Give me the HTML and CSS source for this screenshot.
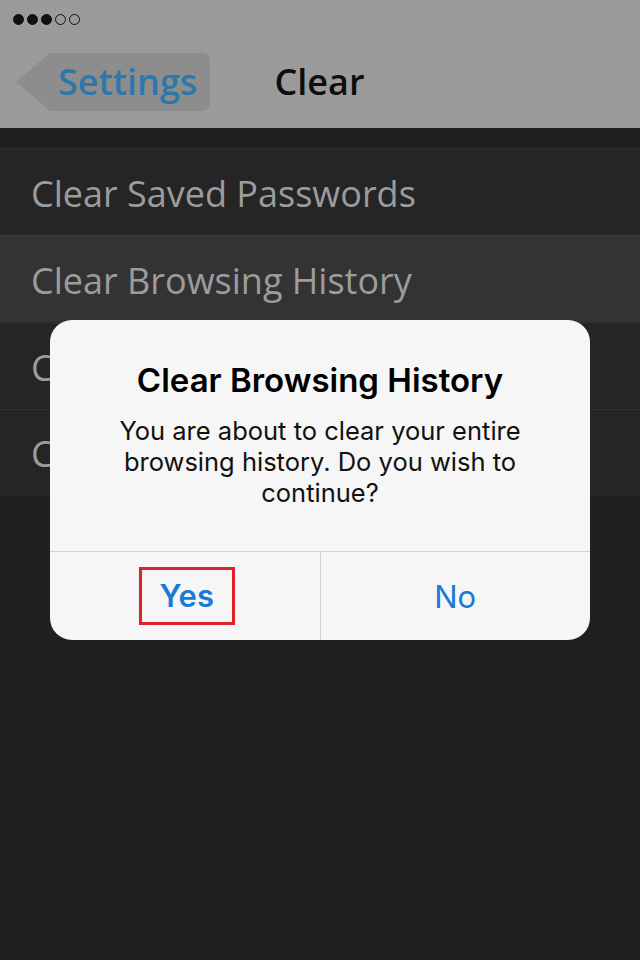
FILE: index.html
```html
<!DOCTYPE html>
<html lang="en">
<head>
<meta charset="UTF-8">
<title>Clear</title>
<link rel="stylesheet" href="styles.css">
</head>
<body>
<div class="screen">
    <div class="top">
        <div class="signal">
            <span class="dot on"></span><span class="dot on"></span><span class="dot on"></span><span class="dot"></span><span class="dot"></span>
        </div>
        <div class="nav">
            <div class="back">
                <svg class="back-tip" width="40" height="58" viewBox="0 0 40 58"><polygon points="40,0 40,58 34,58 0,29 34,0" fill="#8d8d8d"/></svg>
                <span class="back-label">Settings</span>
            </div>
            <div class="nav-title">Clear</div>
        </div>
    </div>
    <ul class="list">
        <li>Clear Saved Passwords</li>
        <li class="active">Clear Browsing History</li>
        <li>Clear Cookies</li>
        <li>Clear Cache</li>
    </ul>

    <div class="alert">
        <div class="alert-body">
            <h2>Clear Browsing History</h2>
            <p>You are about to clear your entire browsing history. Do you wish to continue?</p>
        </div>
        <div class="alert-btns">
            <div class="btn"><span class="mark">Yes</span></div>
            <div class="btn">No</div>
        </div>
    </div>
</div>
</body>
</html>
```

FILE: styles.css
```css
*{
    margin:0;
    padding:0;
    list-style: none;
    box-sizing: border-box;
}
body{
    background:#202020;
    font-family: "Open Sans", sans-serif;
}
.screen{
    width:640px;
    height:960px;
    position:relative;
    background:#202020;
    overflow:hidden;
}
.top{
    height:128px;
    background:#9b9b9b;
}
.signal{
    display:flex;
    gap:3px;
    padding:14px 0 0 13px;
    height:53px;
}
.dot{
    width:11px;
    height:11px;
    border-radius:50%;
    border:1px solid #111;
}
.dot.on{
    background:#111;
}
.nav{
    display:flex;
    align-items:flex-start;
    height:75px;
    padding-left:16px;
}
.back{
    display:flex;
    height:58px;
}
.back-label{
    background:#8d8d8d;
    border-radius:0 7px 7px 0;
    color:#2e77aa;
    font-size:36px;
    font-weight:600;
    line-height:58px;
    padding:0 13px 0 2px;
}
.nav-title{
    margin-left:64px;
    font-size:36px;
    font-weight:600;
    line-height:58px;
    color:#0e0e0e;
}
/*列表*/
.list{
    margin-top:20px;
}
.list li{
    height:87px;
    line-height:87px;
    background:#252525;
    color:#9c9c9c;
    font-size:36px;
    padding-left:31px;
    border-top:2px solid #2c2c2c;
}
.list li.active{
    background:#333;
    border-top-color:#3a3a3a;
}
.list li:nth-child(4){
    border-top:1px solid #333;
}
/*弹框*/
.alert{
    position:absolute;
    left:50px;
    top:320px;
    width:540px;
    background:#f6f6f6;
    border-radius:22px;
    overflow:hidden;
    font-family: Inter, Roboto, sans-serif;
}
.alert-body{
    height:232px;
    padding-top:41px;
    text-align:center;
    border-bottom:1px solid #d4d4d4;
}
.alert-body h2{
    font-size:33px;
    font-weight:600;
    color:#000;
    line-height:38px;
}
.alert-body p{
    font-size:25.5px;
    color:#111;
    line-height:31px;
    padding:16px 40px 0;
}
.alert-btns{
    display:flex;
    height:88px;
}
.btn{
    flex:1;
    display:flex;
    align-items:center;
    justify-content:center;
    font-size:31px;
    color:#1a7ad6;
}
.btn:first-child{
    border-right:1px solid #d4d4d4;
}
.mark{
    border:3px solid #e2202a;
    width:96px;
    height:58px;
    line-height:52px;
    text-align:center;
    font-weight:600;
    margin-left:4px;
}
```
